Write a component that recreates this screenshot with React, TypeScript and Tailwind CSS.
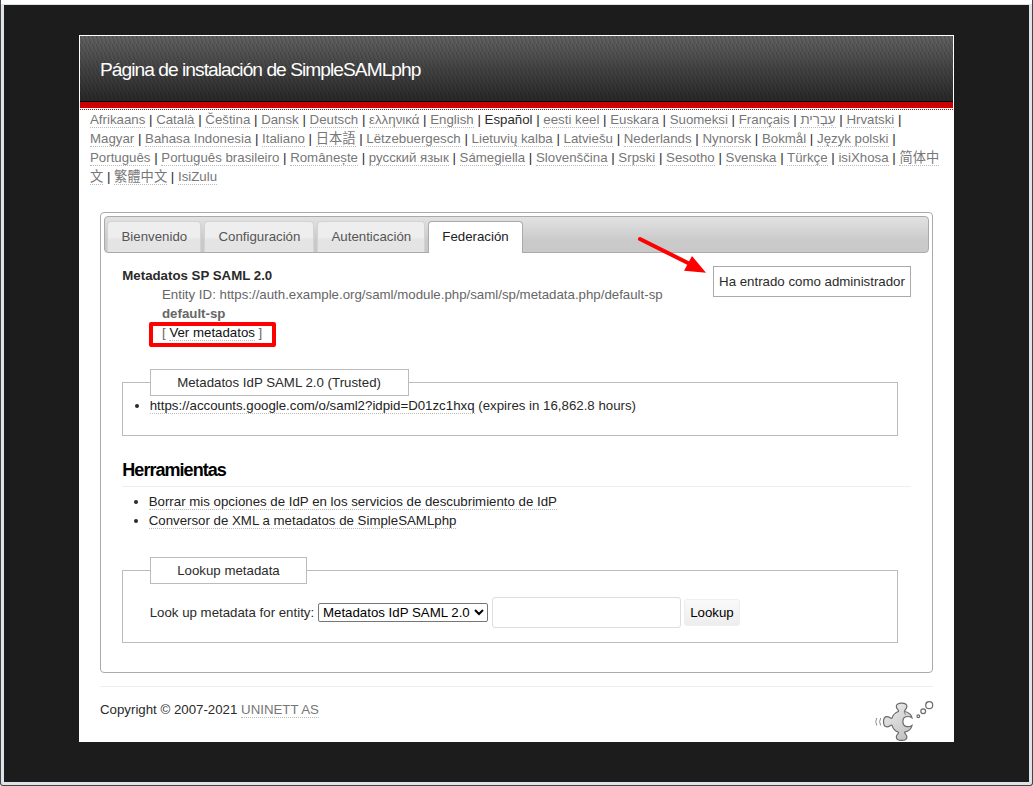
import React from "react";

type Language = { name: string; current?: boolean };

const languages: Language[] = [
  "Afrikaans", "Català", "Čeština", "Dansk", "Deutsch", "ελληνικά", "English", "Español",
  "eesti keel", "Euskara", "Suomeksi", "Français", "עִבְרִית", "Hrvatski", "Magyar",
  "Bahasa Indonesia", "Italiano", "日本語", "Lëtzebuergesch", "Lietuvių kalba", "Latviešu",
  "Nederlands", "Nynorsk", "Bokmål", "Język polski", "Português", "Português brasileiro",
  "Românește", "русский язык", "Sámegiella", "Slovenščina", "Srpski", "Sesotho", "Svenska",
  "Türkçe", "isiXhosa", "简体中文", "繁體中文", "IsiZulu",
].map((name) => ({ name, current: name === "Español" }));

const tabs = [
  { label: "Bienvenido", width: "w-[94px]" },
  { label: "Configuración", width: "w-[110px]" },
  { label: "Autenticación", width: "w-[108px]" },
];

function Header() {
  return (
    <header className="h-[74px] border-b border-dotted border-[#cc0000]">
      <div className="relative flex h-[66px] items-center border-b border-black bg-linear-to-b from-[#626262] to-[#282828] pl-5 pt-0.5">
        <svg className="absolute inset-0 h-full w-full" aria-hidden="true">
          <defs>
            <pattern id="weave" width="4" height="8" patternUnits="userSpaceOnUse">
              <path d="M0.5 0v3M1.5 3v3M2.5 6v2" stroke="#000" strokeOpacity="0.15" />
              <path d="M1.5 0v3M2.5 3v3M3.5 6v2" stroke="#000" strokeOpacity="0.07" />
            </pattern>
          </defs>
          <rect width="100%" height="100%" fill="url(#weave)" />
        </svg>
        <h1 className="relative text-[19.2px] leading-6 tracking-[-0.97px] text-white">
          Página de instalación de SimpleSAMLphp
        </h1>
      </div>
      <div className="h-1.5 bg-[#cc0000]" />
    </header>
  );
}

function Languages() {
  return (
    <nav className="px-2.5">
      {languages.map(({ name, current }, i) => (
        <React.Fragment key={name}>
          {i > 0 && " | "}
          {current ? name : <a className="border-b border-dotted border-[#bbbbbb] text-[#777777]">{name}</a>}
        </React.Fragment>
      ))}
    </nav>
  );
}

function TabBar() {
  return (
    <div className="flex h-[37px] items-end gap-[3px] rounded border border-[#aaaaaa] bg-linear-to-b from-[#e2e2e2] from-0% to-[#c9c9c9] to-70% pl-0.5">
      {tabs.map(({ label, width }) => (
        <div
          key={label}
          className={`${width} h-[31px] rounded-t border border-b-0 border-[#d3d3d3] bg-linear-to-b from-[#eeeeee] from-50% to-[#e4e4e4] to-60% pl-[13.5px] leading-[29px] text-[#555555]`}
        >
          {label}
        </div>
      ))}
      <div className="mb-[-1px] h-8 w-[95px] rounded-t border border-b-0 border-[#aaaaaa] bg-white text-center leading-[29px] text-[#212121]">
        Federación
      </div>
    </div>
  );
}

function Legend({ children, className }: { children: React.ReactNode; className: string }) {
  return (
    <legend className={`ml-[27px] h-[27px] border border-[#bbbbbb] bg-white pl-[26.2px] leading-[25px] ${className}`}>
      {children}
    </legend>
  );
}

const listLink = "border-b border-dotted border-[#bbbbbb] text-[#222222]";

function Federation() {
  return (
    <div className="relative pl-[18px] pt-[13px]">
      <div className="absolute right-[18px] top-[13px] flex h-[31px] w-[198px] items-center justify-center border border-[#aaaaaa] whitespace-nowrap">
        Ha entrado como administrador
      </div>
      <svg className="absolute left-[532px] top-[-19px]" width="72" height="42" aria-hidden="true">
        <path d="M4 5L54 30" stroke="#ff0000" strokeWidth="4" strokeLinecap="round" />
        <path d="M56 22L70 38.7L48 36.7Z" fill="#ff0000" />
      </svg>

      <dl>
        <dt className="pl-[0.3px] font-bold">Metadatos SP SAML 2.0</dt>
        <dd className="ml-10 text-[#666666]">
          Entity ID: https://auth.example.org/saml/module.php/saml/sp/metadata.php/default-sp
        </dd>
        <dd className="ml-10 font-bold text-[#666666]">default-sp</dd>
        <dd className="relative ml-10 text-[#666666]">
          [ <a className="border-b border-dotted border-[#bbbbbb] text-[#111111]">Ver metadatos</a> ]
          <span className="absolute left-[-13px] top-[-1px] h-[25px] w-[127px] rounded-xs border-4 border-[#ff0000]" />
        </dd>
      </dl>

      <fieldset className="mt-[27px] h-[67px] w-[776px] border border-[#bbbbbb]">
        <Legend className="w-[259px]">Metadatos IdP SAML 2.0 (Trusted)</Legend>
        <ul className="list-disc pl-[26.7px]">
          <li>
            <a className={listLink}>https://accounts.google.com/o/saml2?idpid=D01zc1hxq</a> (expires in 16,862.8 hours)
          </li>
        </ul>
      </fieldset>

      <h2 className="mr-[18px] mt-[21px] h-[30px] border-b border-[#eeeeee] pl-[0.3px] text-[18px] leading-[27px] font-bold tracking-[-0.96px] text-black">
        Herramientas
      </h2>
      <ul className="mt-[5px] list-disc pl-[26.7px]">
        <li><a className={listLink}>Borrar mis opciones de IdP en los servicios de descubrimiento de IdP</a></li>
        <li><a className={listLink}>Conversor de XML a metadatos de SimpleSAMLphp</a></li>
      </ul>

      <fieldset className="mt-[27px] h-[86px] w-[776px] border border-[#bbbbbb]">
        <Legend className="w-[157px]">Lookup metadata</Legend>
        <div className="mt-[13px] flex h-[31px] items-center pl-[26.7px]">
          <label className="w-[168.3px] whitespace-nowrap">Look up metadata for entity:</label>
          <select className="h-[19px] w-[170px] rounded-[2px] border border-[#767676] bg-white text-black">
            <option>Metadatos IdP SAML 2.0</option>
          </select>
          <input className="ml-1 h-[31px] w-[189px] rounded-[3px] border border-[#dddddd]" />
          <button className="ml-[3px] h-[27px] w-14 rounded-[3px] border border-[#eeeeee] bg-linear-to-b from-[#fafafa] to-[#ededed] text-black">
            Lookup
          </button>
        </div>
      </fieldset>
    </div>
  );
}

function PuzzleLogo() {
  return (
    <svg className="mt-px -mr-px" width="59" height="40" viewBox="0 0 59 40" fill="none" stroke="#6b6b6b" aria-hidden="true">
      <defs>
        <linearGradient id="piece" x1="0" y1="0" x2="0.6" y2="1">
          <stop offset="0" stopColor="#f0f0f0" />
          <stop offset="1" stopColor="#c4c4c4" />
        </linearGradient>
      </defs>
      <path
        d="M23.500 10.500C24.500 9.200 21.300 8.500 21.300 5.600C21.300 3.200 23.500 2.200 26.600 2.200C29.700 2.200 31.900 3.200 31.900 5.600C31.900 8.500 28.700 9.200 29.700 10.500C33.200 11.300 36.300 13.500 37 16.800C35.300 15.600 33.800 15.400 32 15.500C29.300 15.700 27.900 18 27.900 20.600C27.900 23.200 29.300 25.500 32 25.700C33.800 25.800 35.300 25.600 37 24.400C36.300 27.700 33.200 30.500 29.700 31.200C28.700 32.500 31.900 33.200 31.900 35.900C31.900 38.400 29.700 39.400 26.600 39.400C23.500 39.400 21.300 38.400 21.300 35.900C21.300 33.200 24.500 32.500 23.500 31.200C20.500 30.200 18 27.600 17 24.300C15.800 23.200 14.800 25.800 12 25.800C9.600 25.800 8.500 23.600 8.500 20.700C8.500 17.800 9.600 15.600 12 15.600C14.800 15.600 15.800 18.200 17 17.100C18 13.800 20.500 11.500 23.500 10.500Z"
        fill="url(#piece)"
        strokeWidth="1.200"
      />
      <path d="M29 10.800L30.500 13.800" strokeWidth=".8" />
      <circle cx="43.300" cy="15.300" r="1.400" strokeWidth="1.200" />
      <circle cx="48.200" cy="10.300" r="2.400" strokeWidth="1.200" />
      <circle cx="54.200" cy="4.200" r="3.500" strokeWidth="1.200" />
      <path d="M1.800 17Q-.4 20.700 1.800 24.500M5.700 17Q3.500 20.700 5.700 24.500" stroke="#8c8c8c" />
    </svg>
  );
}

export default function App() {
  return (
    <div
      className="h-[786px] w-[1033px] overflow-hidden rounded-b-[3px] border-x border-b border-[#444444] bg-[#dfe2e7] font-['Liberation_Sans','Noto_Sans_CJK_SC',sans-serif] text-[13.28px] leading-[19px] text-[#2a2a2a]"
      lang="es"
    >
      <div className="h-1 bg-white" />
      <div className="mx-[3px] mt-px flex h-[777px] justify-center bg-[#1c1c1c] pt-[30px]">
        <main className="h-[707px] w-[875px] border border-white bg-white">
          <Header />
          <Languages />
          <section className="mx-5 mt-[26px] h-[461px] rounded border border-[#aaaaaa] p-[3px]">
            <TabBar />
            <Federation />
          </section>
          <footer className="mx-5 mt-[13px] flex justify-between border-t border-[#eeeeee] pt-[13px]">
            <p>
              Copyright © 2007-2021 <a className="border-b border-dotted border-[#bbbbbb] text-[#777777]">UNINETT AS</a>
            </p>
            <PuzzleLogo />
          </footer>
        </main>
      </div>
    </div>
  );
}
